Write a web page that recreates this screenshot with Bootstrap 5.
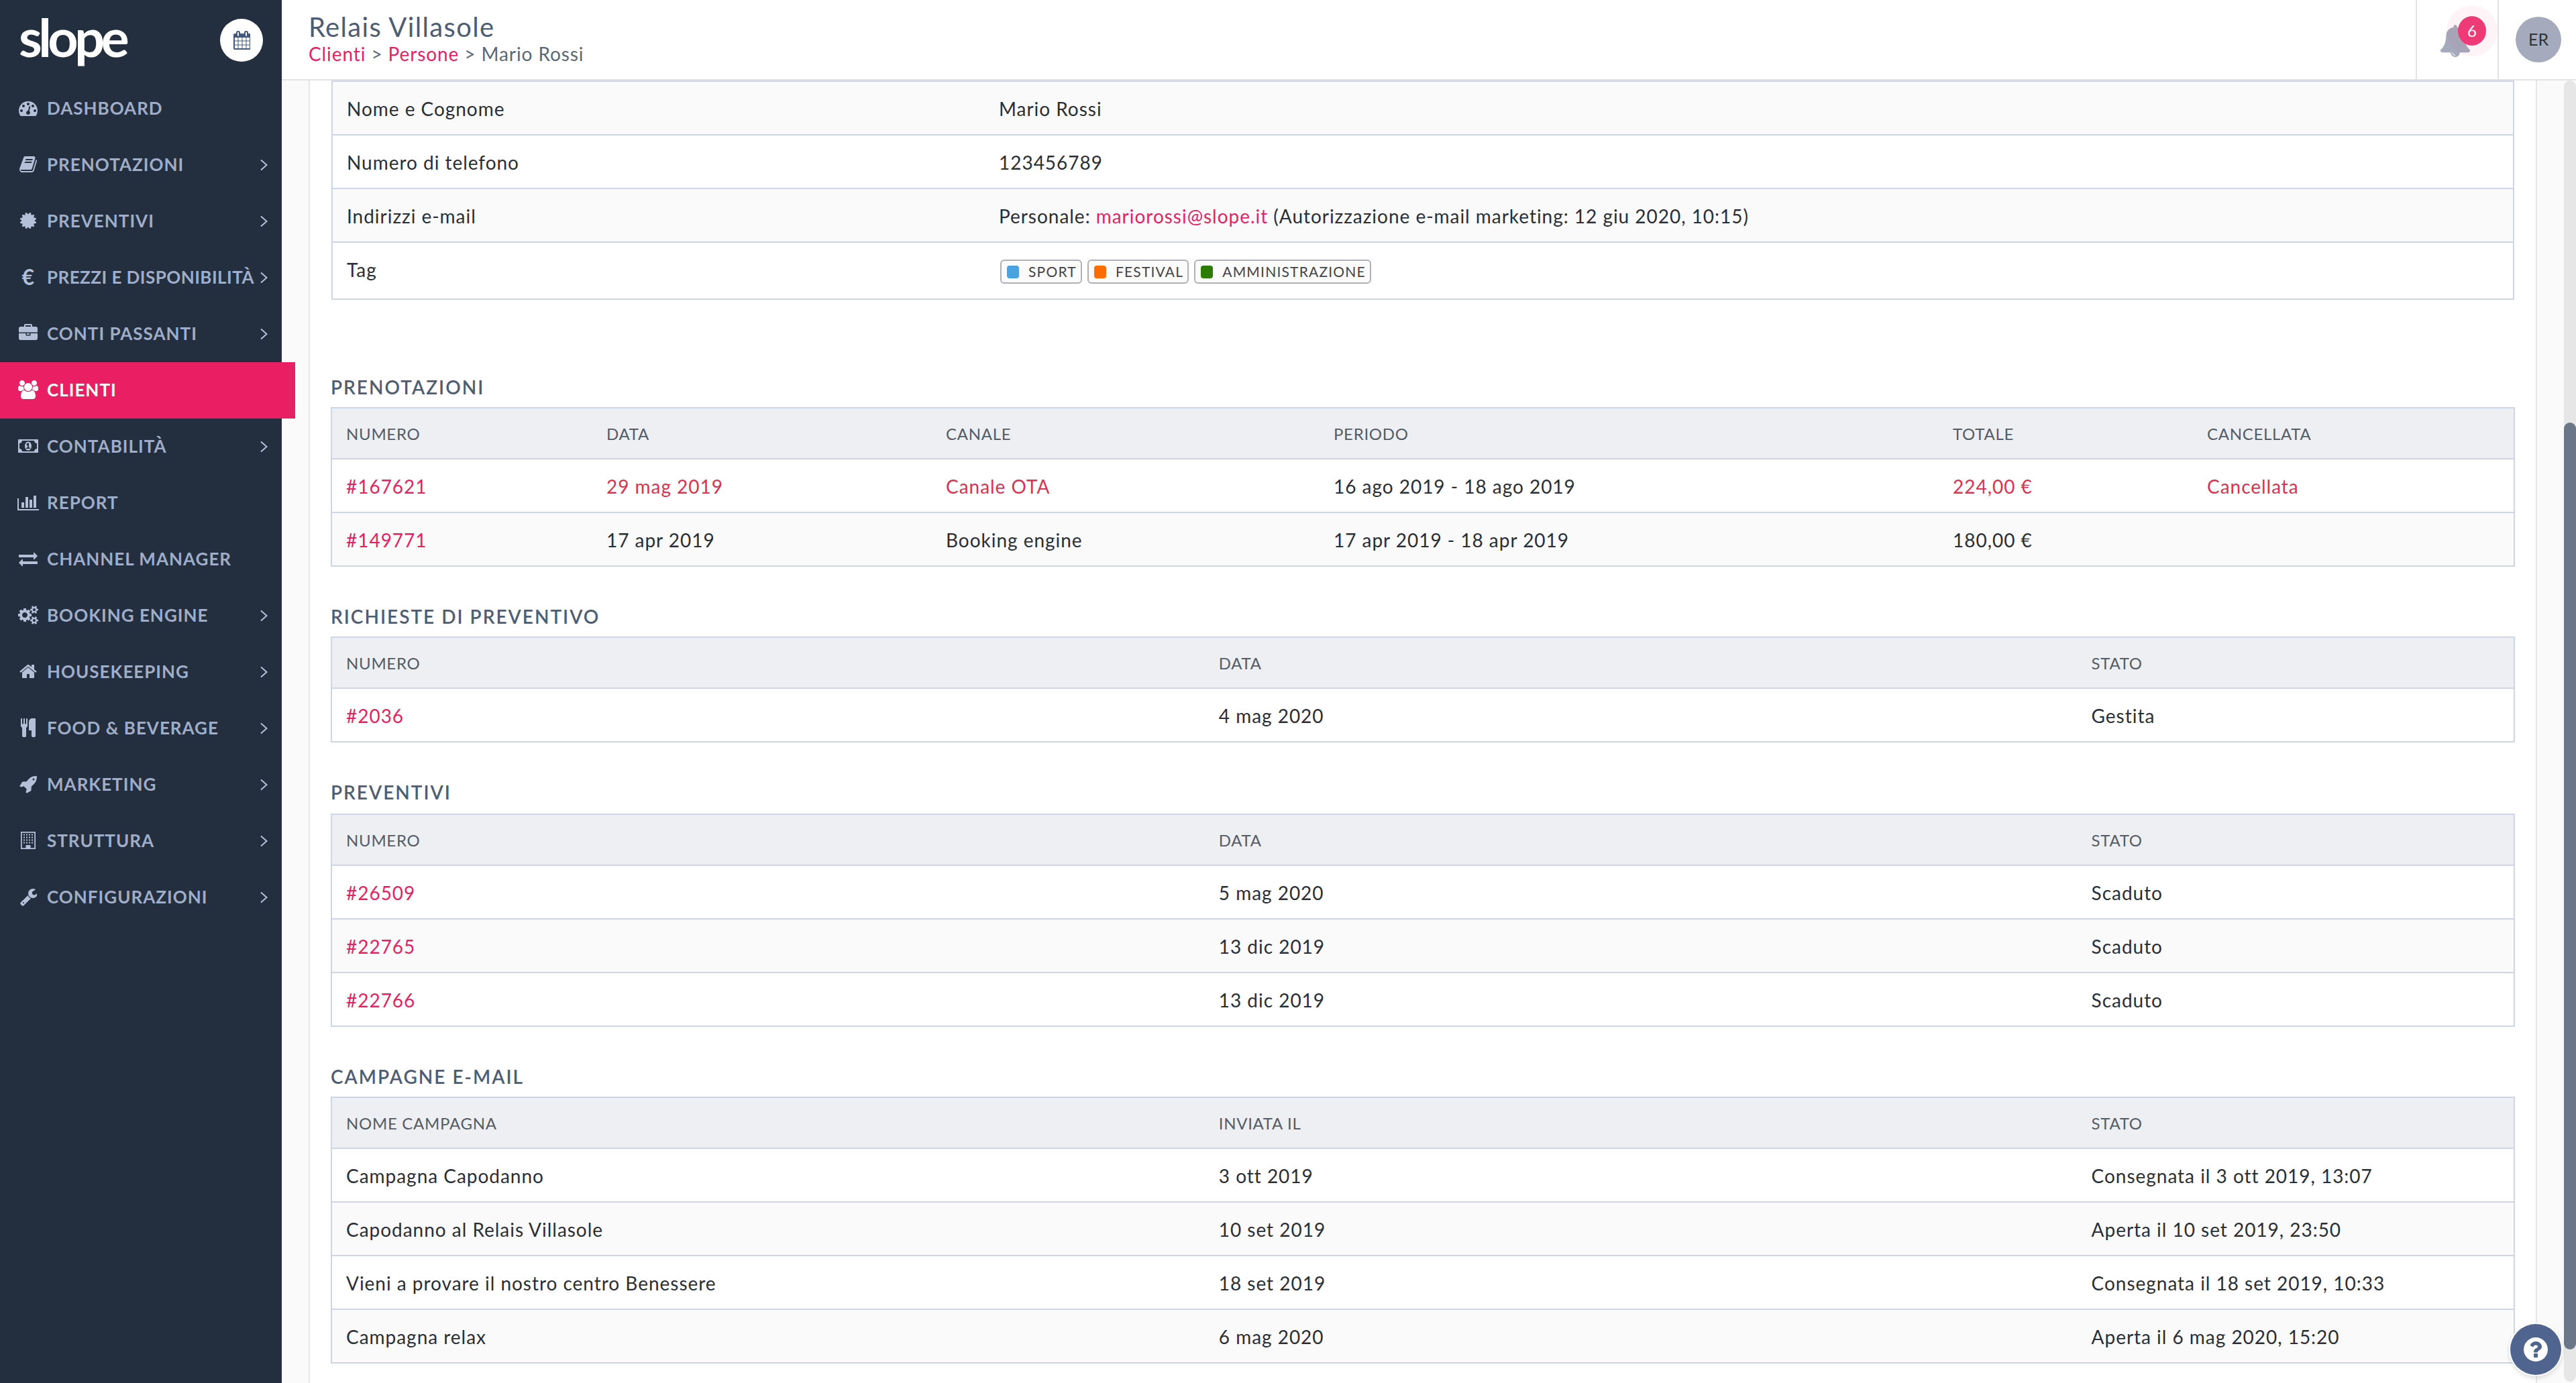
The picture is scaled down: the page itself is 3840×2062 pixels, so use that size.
<!DOCTYPE html>
<html lang="it">
<head>
  <meta charset="UTF-8" />
  <meta name="viewport" content="width=device-width, initial-scale=1.0" />
  <title>Slope - Mario Rossi</title>
  <link href="https://cdn.jsdelivr.net/npm/bootstrap@5.3.0/dist/css/bootstrap.min.css" rel="stylesheet" />
  <style>
    html, body {
      height: 100%;
      margin: 0;
      overflow: hidden;
    }
    body {
      font-family: "Lato", "Liberation Sans", sans-serif;
      font-size: 28px;
      color: #2a2e35;
      background: #fafafa;
    }
    a { color: #e91e63; text-decoration: none; }

    /* sidebar */
    .side-bar {
      width: 420px;
      flex: 0 0 420px;
      height: 100%;
      background: #232f3f;
      position: relative;
      z-index: 3;
    }
    .side-top {
      height: 120px;
      padding: 0 28px;
    }
    .logo-word {
      color: #fff;
      font-size: 79px;
      font-weight: 700;
      line-height: 1;
      letter-spacing: -5.5px;
      margin-top: -12px;
    }
    .cal-btn {
      width: 64px;
      height: 64px;
      background: #fff;
      color: #44587c;
    }
    .cal-btn svg { height: 28px; width: auto; }
    .side-link {
      height: 84px;
      padding: 0 24px 2px;
      color: #9fadc8;
      font-size: 26px;
      font-weight: 700;
      letter-spacing: 1px;
      text-transform: uppercase;
      white-space: nowrap;
    }
    .side-link.tight { letter-spacing: .45px; }
    .side-link.on {
      width: 440px;
      background: #e91e63;
      color: #fff;
    }
    .ico-box {
      width: 36px;
      flex: 0 0 36px;
      margin-right: 10px;
      color: #b4c0d8;
      font-size: 32px;
      line-height: 1;
    }
    .on .ico-box { color: #fff; }
    .ico-box svg { height: 28px; width: auto; fill: currentColor; }
    .chev {
      width: 11px;
      height: 18px;
      margin-left: auto;
      margin-right: -3px;
      margin-top: 2px;
      flex: 0 0 11px;
      fill: none;
      stroke: #b4c0d8;
      stroke-width: 2;
    }

    /* header */
    .main-col { min-width: 0; }
    .top-bar {
      height: 120px;
      flex: 0 0 120px;
      background: #fff;
      border-bottom: 2px solid #e2e2e2;
      padding-left: 40px;
    }
    .hotel-name {
      color: #4e5d72;
      font-size: 40px;
      line-height: 46px;
      margin-top: 17px;
      letter-spacing: 1.35px;
    }
    .crumbs {
      color: #5a6778;
      font-size: 28px;
      line-height: 34px;
      letter-spacing: .9px;
    }
    .bell-cell {
      width: 124px;
      height: 118px;
      border-left: 2px solid #e2e2e2;
      border-right: 2px solid #e2e2e2;
    }
    .bell-ico {
      position: absolute;
      left: 33px;
      top: 37px;
      width: 48px;
      height: 48px;
      fill: #a5abbd;
    }
    .bell-halo {
      position: absolute;
      left: 44px;
      top: 8px;
      width: 76px;
      height: 76px;
      background: rgba(233, 30, 99, .05);
    }
    .bell-count {
      position: absolute;
      left: 61px;
      top: 24px;
      width: 42px;
      height: 44px;
      background: #ee3b77;
      color: #fff;
      font-size: 24px;
    }
    .user-cell { width: 115px; }
    .user-pic {
      width: 68px;
      height: 68px;
      margin-left: 25px;
      background: #a5abbd;
      color: #333;
      font-size: 25px;
    }

    /* content */
    .page-wrap { flex: 1 1 0; min-height: 0; }
    .gutter-l { width: 40px; flex: 0 0 40px; }
    .sheet {
      flex: 1 1 0;
      min-width: 0;
      background: #fff;
      border-left: 2px solid #e6e6e6;
      border-right: 2px solid #e6e6e6;
      padding: 0 31px;
      overflow: hidden;
    }
    .gutter-r { width: 40px; flex: 0 0 40px; }
    .fake-scroll {
      width: 18px;
      flex: 0 0 18px;
      background: #e6e6e6;
      border-radius: 9px;
      margin-bottom: 2px;
    }
    .fake-thumb {
      height: 1382px;
      margin-top: 510px;
      background: #6b7788;
      border-radius: 9px;
    }

    .sec-title {
      color: #4e5d72;
      font-size: 28px;
      font-weight: 600;
      line-height: 34px;
      letter-spacing: 2px;
      text-transform: uppercase;
      margin: 57px 0 13px;
    }
    .sec-title.first { margin-top: 113px; }
    .sec-title.wide-gap { margin-bottom: 15px; }

    .info-tbl, .data-tbl {
      table-layout: fixed;
      border-collapse: separate;
      border-spacing: 0;
      margin: 0;
      font-size: 28px;
      letter-spacing: .97px;
      --bs-table-color: #2a2e35;
      --bs-table-bg: transparent;
    }
    .info-tbl {
      width: calc(100% - 2px);
      margin: 0 1px;
      border: 2px solid #cdd6e6;
      border-bottom: 0;
    }
    .data-tbl {
      border: 2px solid #cdd6e6;
      border-bottom: 0;
    }
    .info-tbl.table > tbody > tr > td,
    .data-tbl.table > tbody > tr > td,
    .data-tbl.table > thead > tr > th {
      border-bottom: 2px solid #cdd6e6;
      padding: 22px 21px 20px;
      line-height: 36px;
      vertical-align: top;
      box-shadow: none;
    }
    .info-tbl.table > tbody > tr > td + td { padding-left: 22px; }
    .data-tbl.table > thead > tr > th {
      background: #edeff3;
      color: #555c66;
      font-size: 24px;
      font-weight: 400;
      line-height: 30px;
      padding: 23px 21px 21px;
      letter-spacing: .7px;
      text-transform: uppercase;
    }
    .info-tbl > tbody > tr:nth-child(odd) > td,
    .data-tbl > tbody > tr:nth-child(even) > td { background: #fafafb; }
    .info-tbl.table > tbody > tr > td.tag-cell { padding-top: 25px; padding-bottom: 22px; }
    .gone { color: #e0304f !important; }

    .w-info { width: 971px; }
    .w-c1 { width: 388px; }
    .w-c2 { width: 506px; }
    .w-c3 { width: 578px; }
    .w-c4 { width: 923px; }
    .w-c5 { width: 379px; }
    .w-40 { width: 40%; }
    .w-20 { width: 20%; }

    .tag-row { padding-left: 2px; }
    .tag-pill {
      height: 36px;
      padding: 0 6px 0 8px;
      margin-right: 8px;
      border: 2px solid #b0b1b6;
      border-radius: 6px;
      background: #fbfbfc;
      color: #444;
      font-size: 21px;
      letter-spacing: 1.2px;
      text-transform: uppercase;
    }
    .tag-dot {
      width: 18px;
      height: 19px;
      border-radius: 4px;
      margin-right: 14px;
    }
    .dot-blue { background: #4aa3e0; }
    .dot-orange { background: #ff6d00; }
    .dot-green { background: #2a7d00; }

    .help-btn {
      position: absolute;
      right: 22px;
      bottom: 12px;
      width: 76px;
      height: 76px;
      background: #4f658f;
      box-shadow: 0 0 0 2px #fff, 0 3px 8px rgba(0, 0, 0, .2);
      z-index: 5;
    }
    .help-btn svg { width: 36px; height: 36px; fill: #fff; }
  </style>
</head>
<body class="d-flex">

  <svg width="0" height="0" class="position-absolute">
    <symbol id="i-dash" viewBox="0 0 1792 1792"><path d="M384 1152q0-53-37.500-90.500t-90.500-37.500-90.500 37.500-37.500 90.500 37.500 90.500 90.500 37.500 90.500-37.500 37.500-90.500zm192-448q0-53-37.500-90.500t-90.500-37.500-90.500 37.500-37.500 90.500 37.500 90.500 90.500 37.500 90.500-37.500 37.500-90.500zm428 481l101-382q6-26-7.500-48.500t-38.500-29.500-48 7-30 39l-101 382q-60 5-107 43.500t-63 98.500q-20 77 20 146t117 89 146-20 89-117q16-60-6-117t-72-91zm660-33q0-53-37.500-90.500t-90.500-37.500-90.500 37.500-37.500 90.500 37.500 90.500 90.500 37.500 90.500-37.500 37.500-90.500zm-640-640q0-53-37.500-90.500t-90.500-37.500-90.500 37.500-37.500 90.500 37.500 90.500 90.500 37.500 90.500-37.500 37.500-90.500zm448 192q0-53-37.500-90.500t-90.500-37.500-90.500 37.500-37.500 90.500 37.500 90.500 90.500 37.500 90.500-37.500 37.500-90.500zm320 448q0 261-141 483-19 29-54 29h-1402q-35 0-54-29-141-221-141-483 0-182 71-348t191-286 286-191 348-71 348 71 286 191 191 286 71 348z"/></symbol>
    <symbol id="i-book" viewBox="0 0 1792 1792"><path d="M1703 478q40 57 18 129l-275 906q-19 64-76.500 107.500t-122.500 43.500h-923q-77 0-148.500-53.500t-99.500-131.500q-24-67-2-127 0-4 3-27t4-37q1-8-3-21.500t-3-19.500q2-11 8-21t16.500-23.500 16.500-23.500q23-38 45-91.500t30-91.500q3-10 .5-30t-.5-28q3-11 17-28t17-23q21-36 42-92t25-90q1-9-2.500-32t.5-28q4-13 22-30.500t22-22.500q19-26 42.500-84.500t27.500-96.500q1-8-3-25.500t-2-26.500q2-8 9-18t18-23 17-21q8-12 16.500-30.500t15-35 16-36 19.500-32 26.500-23.500 36-11.500 47.500 5.500l-1 3q38-9 51-9h761q74 0 114 56t18 130l-274 906q-36 119-71.500 153.500t-128.500 34.500h-869q-27 0-38 15-11 16-1 43 24 70 144 70h923q29 0 56-15.500t35-41.500l300-987q7-22 5-57 38 15 59 43zm-1064 2q-4 13 2 22.500t20 9.500h608q13 0 25.500-9.500t16.500-22.500l21-64q4-13-2-22.500t-20-9.500h-608q-13 0-25.500 9.500t-16.500 22.500zm-83 256q-4 13 2 22.500t20 9.500h608q13 0 25.500-9.500t16.500-22.500l21-64q4-13-2-22.500t-20-9.500h-608q-13 0-25.500 9.500t-16.500 22.500z"/></symbol>
    <symbol id="i-cert" viewBox="0 0 1536 1792"><path transform="translate(-128)" d="M1504 896l138 135q30 28 20 70-12 41-52 51l-188 48 53 186q12 41-19 70-29 31-70 19l-186-53-48 188q-10 40-51 52-12 2-19 2-31 0-51-22l-135-138-135 138q-28 30-70 20-41-11-51-52l-48-188-186 53q-41 12-70-19-31-29-19-70l53-186-188-48q-40-10-52-51-10-42 20-70l138-135-138-135q-30-28-20-70 12-41 52-51l188-48-53-186q-12-41 19-70 29-31 70-19l186 53 48-188q10-41 51-51 41-12 70 19l135 139 135-139q29-30 70-19 41 10 51 51l48 188 186-53q41-12 70 19 31 29 19 70l-53 186 188 48q40 10 52 51 10 42-20 70z"/></symbol>
    <symbol id="i-case" viewBox="0 0 1792 1792"><path d="M640 256h512v-128h-512v128zm1152 640v480q0 66-47 113t-113 47h-1472q-66 0-113-47t-47-113v-480h672v160q0 26 19 45t45 19h320q26 0 45-19t19-45v-160h672zm-768 0v128h-256v-128h256zm768-480v384h-1792v-384q0-66 47-113t113-47h352v-160q0-40 28-68t68-28h576q40 0 68 28t28 68v160h352q66 0 113 47t47 113z"/></symbol>
    <symbol id="i-users" viewBox="0 0 1920 1792"><path d="M593 896q-162 5-265 128h-134q-82 0-138-40.500t-56-118.500q0-353 124-353 6 0 43.500 21t97.500 42.500 119 21.500q67 0 133-23-5 37-5 66 0 139 81 256zm1071 637q0 120-73 189.500t-194 69.500h-874q-121 0-194-69.500t-73-189.500q0-53 3.500-103.500t14-109 26.500-108.500 43-97.500 62-81 85.500-53.500 111.500-20q10 0 43 21.500t73 48 107 48 135 21.500 135-21.500 107-48 73-48 43-21.500q61 0 111.500 20t85.500 53.500 62 81 43 97.500 26.500 108.500 14 109 3.500 103.500zm-1024-1277q0 106-75 181t-181 75-181-75-75-181 75-181 181-75 181 75 75 181zm704 384q0 159-112.500 271.500t-271.500 112.500-271.500-112.500-112.500-271.500 112.500-271.500 271.500-112.500 271.500 112.500 112.500 271.500zm576 225q0 78-56 118.500t-138 40.500h-134q-103-123-265-128 81-117 81-256 0-29-5-66 66 23 133 23 59 0 119-21.500t97.500-42.500 43.500-21q124 0 124 353zm-128-609q0 106-75 181t-181 75-181-75-75-181 75-181 181-75 181 75 75 181z"/></symbol>
    <symbol id="i-money" viewBox="0 0 1920 1792"><path d="M768 1152h384v-96h-128v-448h-114l-148 137 77 80q42-37 55-57h2v288h-128v96zm512-256q0 70-21 142t-59.500 134-101.500 101-138 39-138-39-101.500-101-59.500-134-21-142 21-142 59.500-134 101.500-101 138-39 138 39 101.500 101 59.500 134 21 142zm512 256v-512q-106 0-181-75t-75-181h-1152q0 106-75 181t-181 75v512q106 0 181 75t75 181h1152q0-106 75-181t181-75zm128-832v1152q0 26-19 45t-45 19h-1792q-26 0-45-19t-19-45v-1152q0-26 19-45t45-19h1792q26 0 45 19t19 45z"/></symbol>
    <symbol id="i-chart" viewBox="0 0 2048 1792"><path d="M640 896v512h-256v-512h256zm384-512v1024h-256v-1024h256zm1024 1152v128h-2048v-1152h128v1024h1920zm-640-896v768h-256v-768h256zm384-384v1152h-256v-1152h256z"/></symbol>
    <symbol id="i-swap" viewBox="0 0 1792 1792"><path d="M1792 1184v192q0 13-9.500 22.500t-22.500 9.500h-1376v192q0 13-9.500 22.500t-22.500 9.500q-12 0-24-10l-319-320q-9-9-9-22 0-14 9-23l320-320q9-9 23-9 13 0 22.500 9.500t9.500 22.500v192h1376q13 0 22.500 9.500t9.500 22.500zm0-544q0 14-9 23l-320 320q-9 9-23 9-13 0-22.500-9.500t-9.500-22.500v-192h-1376q-13 0-22.500-9.500t-9.500-22.500v-192q0-13 9.500-22.500t22.500-9.500h1376v-192q0-14 9-23t23-9q12 0 24 10l319 319q9 9 9 23z"/></symbol>
    <symbol id="i-cogs" viewBox="0 0 1920 1792"><path d="M896 896q0-106-75-181t-181-75-181 75-75 181 75 181 181 75 181-75 75-181zm768 512q0-52-38-90t-90-38-90 38-38 90q0 53 37.500 90.500t90.500 37.500 90.500-37.500 37.500-90.500zm0-1024q0-52-38-90t-90-38-90 38-38 90q0 53 37.500 90.500t90.500 37.500 90.500-37.500 37.500-90.500zm-384 421v185q0 10-7 19.500t-16 10.500l-155 24q-11 35-32 76 34 48 90 115 7 11 7 20 0 12-7 19-23 30-82.500 89.500t-78.500 59.500q-11 0-21-7l-115-90q-37 19-77 31-11 108-23 155-7 24-30 24h-186q-11 0-20-7.500t-10-17.500l-23-153q-34-10-75-31l-118 89q-7 7-20 7-11 0-21-8-144-133-144-160 0-9 7-19 10-14 41-53t47-61q-23-44-35-82l-152-24q-10-1-17-9.500t-7-19.500v-185q0-10 7-19.500t16-10.500l155-24q11-35 32-76-34-48-90-115-7-11-7-20 0-12 7-20 22-30 82-89t79-59q11 0 21 7l115 90q34-18 77-32 11-108 23-154 7-24 30-24h186q11 0 20 7.500t10 17.500l23 153q34 10 75 31l118-89q8-7 20-7 11 0 21 8 144 133 144 160 0 8-7 19-12 16-42 54t-45 60q23 48 34 82l152 23q10 2 17 10.500t7 19.500zm640 533v140q0 16-149 31-12 27-30 52 51 113 51 138 0 4-4 7-122 71-124 71-8 0-46-47t-52-68q-20 2-30 2t-30-2q-14 21-52 68t-46 47q-2 0-124-71-4-3-4-7 0-25 51-138-18-25-30-52-149-15-149-31v-140q0-16 149-31 13-29 30-52-51-113-51-138 0-4 4-7 4-2 35-20t59-34 30-16q8 0 46 46.500t52 67.500q20-2 30-2t30 2q51-71 92-112l6-2q4 0 124 70 4 3 4 7 0 25-51 138 17 23 30 52 149 15 149 31zm0-1024v140q0 16-149 31-12 27-30 52 51 113 51 138 0 4-4 7-122 71-124 71-8 0-46-47t-52-68q-20 2-30 2t-30-2q-14 21-52 68t-46 47q-2 0-124-71-4-3-4-7 0-25 51-138-18-25-30-52-149-15-149-31v-140q0-16 149-31 13-29 30-52-51-113-51-138 0-4 4-7 4-2 35-20t59-34 30-16q8 0 46 46.500t52 67.500q20-2 30-2t30 2q51-71 92-112l6-2q4 0 124 70 4 3 4 7 0 25-51 138 17 23 30 52 149 15 149 31z"/></symbol>
    <symbol id="i-home" viewBox="0 0 1664 1792"><path transform="translate(-64)" d="M1472 992v480q0 26-19 45t-45 19h-384v-384h-256v384h-384q-26 0-45-19t-19-45v-480q0-1 .5-3t.5-3l575-474 575 474q1 2 1 6zm223-69l-62 74q-8 9-21 11h-3q-13 0-21-7l-692-577-692 577q-12 8-24 7-13-2-21-11l-62-74q-8-10-7-23.500t11-21.500l719-599q32-26 76-26t76 26l244 204v-195q0-14 9-23t23-9h192q14 0 23 9t9 23v408l219 182q10 8 11 21.500t-7 23.500z"/></symbol>
    <symbol id="i-food" viewBox="0 0 1408 1792"><path d="M640 64v640q0 61-35.500 111t-92.500 70v779q0 52-38 90t-90 38h-128q-52 0-90-38t-38-90v-779q-57-20-92.500-70t-35.500-111v-640q0-26 19-45t45-19 45 19 19 45v416q0 26 19 45t45 19 45-19 19-45v-416q0-26 19-45t45-19 45 19 19 45v416q0 26 19 45t45 19 45-19 19-45v-416q0-26 19-45t45-19 45 19 19 45zm768 0v1600q0 52-38 90t-90 38h-128q-52 0-90-38t-38-90v-512h-224q-13 0-22.500-9.500t-9.500-22.500v-800q0-132 94-226t226-94h256q26 0 45 19t19 45z"/></symbol>
    <symbol id="i-rocket" viewBox="0 0 1664 1792"><path transform="translate(-64)" d="M1504 448q0-40-28-68t-68-28-68 28-28 68 28 68 68 28 68-28 28-68zm224-288q0 249-75.500 430.500t-253.500 360.500q-81 80-195 176l-20 379q-2 16-16 26l-384 224q-7 4-16 4-12 0-23-9l-64-64q-13-14-8-32l85-276-281-281-276 85q-3 1-9 1-14 0-23-9l-64-64q-17-19-5-39l224-384q10-14 26-16l379-20q96-114 176-195 188-187 358-258t431-71q14 0 24 9.500t10 22.500z"/></symbol>
    <symbol id="i-wrench" viewBox="0 0 1664 1792"><path d="M448 1472q0-26-19-45t-45-19-45 19-19 45 19 45 45 19 45-19 19-45zm644-420l-682 682q-37 37-90 37-52 0-91-37l-106-108q-38-36-38-90 0-53 38-91l681-681q39 98 114.500 173.500t173.500 114.500zm634-435q0 39-23 106-47 134-164.500 217.500t-258.500 83.500q-185 0-316.500-131.500t-131.500-316.500 131.500-316.500 316.500-131.500q58 0 121.500 16.500t107.500 46.500q16 11 16 28t-16 28l-293 169v224l193 107q5-3 79-48.500t135.500-81 70.500-35.500q15 0 23.500 10t8.500 25z"/></symbol>
    <symbol id="i-build" viewBox="0 0 1408 1792"><path fill-rule="evenodd" d="M0 64h1408v1664H0zM112 176v1440h368v-272h448v272h368V176zM256 288h128v128H256zm256 0h128v128H512zm256 0h128v128H768zm256 0h128v128h-128zM256 544h128v128H256zm256 0h128v128H512zm256 0h128v128H768zm256 0h128v128h-128zM256 800h128v128H256zm256 0h128v128H512zm256 0h128v128H768zm256 0h128v128h-128zM256 1056h128v128H256zm256 0h128v128H512zm256 0h128v128H768zm256 0h128v128h-128z"/></symbol>
    <symbol id="i-cal" viewBox="0 0 1664 1792"><path d="M192 1664h288v-288h-288v288zm352 0h320v-288h-320v288zm-352-352h288v-320h-288v320zm352 0h320v-320h-320v320zm-352-384h288v-288h-288v288zm736 736h320v-288h-320v288zm-384-736h320v-288h-320v288zm768 736h288v-288h-288v288zm-384-352h320v-320h-320v320zm-352-864v-288q0-13-9.500-22.500t-22.500-9.500h-64q-13 0-22.500 9.500t-9.500 22.500v288q0 13 9.500 22.500t22.500 9.500h64q13 0 22.500-9.500t9.500-22.500zm736 864h288v-320h-288v320zm-384-384h320v-288h-320v288zm384 0h288v-288h-288v288zm32-480v-288q0-13-9.500-22.500t-22.500-9.500h-64q-13 0-22.500 9.500t-9.500 22.500v288q0 13 9.500 22.500t22.500 9.500h64q13 0 22.500-9.500t9.500-22.500zm384-64v1280q0 52-38 90t-90 38h-1408q-52 0-90-38t-38-90v-1280q0-52 38-90t90-38h128v-96q0-66 47-113t113-47h64q66 0 113 47t47 113v96h384v-96q0-66 47-113t113-47h64q66 0 113 47t47 113v96h128q52 0 90 38t38 90z"/></symbol>
    <symbol id="i-chev" viewBox="0 0 11 18"><path d="M1 1.500 9.500 9 1 16.500"/></symbol>
  </svg>

  <aside class="side-bar">
    <div class="side-top d-flex align-items-center justify-content-between">
      <span class="logo-word">slope</span>
      <span class="cal-btn rounded-circle d-flex align-items-center justify-content-center"><svg viewBox="0 0 1664 1792" fill="currentColor"><use href="#i-cal"/></svg></span>
    </div>
    <nav>
      <a class="side-link d-flex align-items-center" href="#"><span class="ico-box d-flex justify-content-center"><svg viewBox="0 0 1792 1792"><use href="#i-dash"/></svg></span>Dashboard</a>
      <a class="side-link d-flex align-items-center" href="#"><span class="ico-box d-flex justify-content-center"><svg viewBox="0 0 1792 1792"><use href="#i-book"/></svg></span>Prenotazioni<svg class="chev"><use href="#i-chev"/></svg></a>
      <a class="side-link d-flex align-items-center" href="#"><span class="ico-box d-flex justify-content-center"><svg viewBox="0 0 1536 1792"><use href="#i-cert"/></svg></span>Preventivi<svg class="chev"><use href="#i-chev"/></svg></a>
      <a class="side-link tight d-flex align-items-center" href="#"><span class="ico-box d-flex justify-content-center">€</span>Prezzi e disponibilità<svg class="chev"><use href="#i-chev"/></svg></a>
      <a class="side-link d-flex align-items-center" href="#"><span class="ico-box d-flex justify-content-center"><svg viewBox="0 0 1792 1792"><use href="#i-case"/></svg></span>Conti passanti<svg class="chev"><use href="#i-chev"/></svg></a>
      <a class="side-link on d-flex align-items-center" href="#"><span class="ico-box d-flex justify-content-center"><svg viewBox="0 0 1920 1792"><use href="#i-users"/></svg></span>Clienti</a>
      <a class="side-link d-flex align-items-center" href="#"><span class="ico-box d-flex justify-content-center"><svg viewBox="0 0 1920 1792"><use href="#i-money"/></svg></span>Contabilità<svg class="chev"><use href="#i-chev"/></svg></a>
      <a class="side-link d-flex align-items-center" href="#"><span class="ico-box d-flex justify-content-center"><svg viewBox="0 0 2048 1792"><use href="#i-chart"/></svg></span>Report</a>
      <a class="side-link d-flex align-items-center" href="#"><span class="ico-box d-flex justify-content-center"><svg viewBox="0 0 1792 1792"><use href="#i-swap"/></svg></span>Channel manager</a>
      <a class="side-link d-flex align-items-center" href="#"><span class="ico-box d-flex justify-content-center"><svg viewBox="0 0 1920 1792"><use href="#i-cogs"/></svg></span>Booking engine<svg class="chev"><use href="#i-chev"/></svg></a>
      <a class="side-link d-flex align-items-center" href="#"><span class="ico-box d-flex justify-content-center"><svg viewBox="0 0 1664 1792"><use href="#i-home"/></svg></span>Housekeeping<svg class="chev"><use href="#i-chev"/></svg></a>
      <a class="side-link d-flex align-items-center" href="#"><span class="ico-box d-flex justify-content-center"><svg viewBox="0 0 1408 1792"><use href="#i-food"/></svg></span>Food &amp; beverage<svg class="chev"><use href="#i-chev"/></svg></a>
      <a class="side-link d-flex align-items-center" href="#"><span class="ico-box d-flex justify-content-center"><svg viewBox="0 0 1664 1792"><use href="#i-rocket"/></svg></span>Marketing<svg class="chev"><use href="#i-chev"/></svg></a>
      <a class="side-link d-flex align-items-center" href="#"><span class="ico-box d-flex justify-content-center"><svg viewBox="0 0 1408 1792"><use href="#i-build"/></svg></span>Struttura<svg class="chev"><use href="#i-chev"/></svg></a>
      <a class="side-link d-flex align-items-center" href="#"><span class="ico-box d-flex justify-content-center"><svg viewBox="0 0 1664 1792"><use href="#i-wrench"/></svg></span>Configurazioni<svg class="chev"><use href="#i-chev"/></svg></a>
    </nav>
  </aside>

  <div class="main-col d-flex flex-column flex-grow-1 h-100">
    <header class="top-bar d-flex justify-content-between">
      <div>
        <div class="hotel-name">Relais Villasole</div>
        <div class="crumbs"><a href="#">Clienti</a> &gt; <a href="#">Persone</a> &gt; Mario Rossi</div>
      </div>
      <div class="d-flex">
        <div class="bell-cell position-relative">
          <svg class="bell-ico" viewBox="0 0 1792 1792"><path d="M912 1696q0-16-16-16-59 0-101.500-42.500t-42.500-101.500q0-16-16-16t-16 16q0 73 51.500 124.500t124.500 51.500q16 0 16-16zm816-288q0 52-38 90t-90 38h-448q0 106-75 181t-181 75-181-75-75-181h-448q-52 0-90-38t-38-90q50-42 91-88t85-119.500 74.500-158.500 50-206 19.500-260q0-152 117-282.500t307-158.500q-8-19-8-39 0-40 28-68t68-28 68 28 28 68q0 20-8 39 190 28 307 158.500t117 282.500q0 139 19.500 260t50 206 74.500 158.500 85 119.500 91 88z"/></svg>
          <span class="bell-halo rounded-circle"></span>
          <span class="bell-count rounded-circle d-flex align-items-center justify-content-center">6</span>
        </div>
        <div class="user-cell d-flex align-items-center">
          <span class="user-pic rounded-circle d-flex align-items-center justify-content-center">ER</span>
        </div>
      </div>
    </header>

    <div class="page-wrap d-flex">
      <div class="gutter-l"></div>
      <main class="sheet">
        <table class="table info-tbl">
          <colgroup><col class="w-info"><col></colgroup>
          <tbody>
            <tr><td>Nome e Cognome</td><td>Mario Rossi</td></tr>
            <tr><td>Numero di telefono</td><td>123456789</td></tr>
            <tr><td>Indirizzi e-mail</td><td>Personale: <a href="#">mariorossi@slope.it</a> (Autorizzazione e-mail marketing: 12 giu 2020, 10:15)</td></tr>
            <tr>
              <td>Tag</td>
              <td class="tag-cell">
                <div class="tag-row d-flex">
                  <span class="tag-pill d-inline-flex align-items-center"><span class="tag-dot dot-blue"></span>Sport</span>
                  <span class="tag-pill d-inline-flex align-items-center"><span class="tag-dot dot-orange"></span>Festival</span>
                  <span class="tag-pill d-inline-flex align-items-center"><span class="tag-dot dot-green"></span>Amministrazione</span>
                </div>
              </td>
            </tr>
          </tbody>
        </table>

        <h2 class="sec-title first">Prenotazioni</h2>
        <table class="table data-tbl">
          <colgroup><col class="w-c1"><col class="w-c2"><col class="w-c3"><col class="w-c4"><col class="w-c5"><col></colgroup>
          <thead><tr><th>Numero</th><th>Data</th><th>Canale</th><th>Periodo</th><th>Totale</th><th>Cancellata</th></tr></thead>
          <tbody>
            <tr><td><a href="#">#167621</a></td><td class="gone">29 mag 2019</td><td class="gone">Canale OTA</td><td>16 ago 2019 - 18 ago 2019</td><td class="gone">224,00 €</td><td class="gone">Cancellata</td></tr>
            <tr><td><a href="#">#149771</a></td><td>17 apr 2019</td><td>Booking engine</td><td>17 apr 2019 - 18 apr 2019</td><td>180,00 €</td><td></td></tr>
          </tbody>
        </table>

        <h2 class="sec-title">Richieste di preventivo</h2>
        <table class="table data-tbl">
          <colgroup><col class="w-40"><col class="w-40"><col class="w-20"></colgroup>
          <thead><tr><th>Numero</th><th>Data</th><th>Stato</th></tr></thead>
          <tbody>
            <tr><td><a href="#">#2036</a></td><td>4 mag 2020</td><td>Gestita</td></tr>
          </tbody>
        </table>

        <h2 class="sec-title wide-gap">Preventivi</h2>
        <table class="table data-tbl">
          <colgroup><col class="w-40"><col class="w-40"><col class="w-20"></colgroup>
          <thead><tr><th>Numero</th><th>Data</th><th>Stato</th></tr></thead>
          <tbody>
            <tr><td><a href="#">#26509</a></td><td>5 mag 2020</td><td>Scaduto</td></tr>
            <tr><td><a href="#">#22765</a></td><td>13 dic 2019</td><td>Scaduto</td></tr>
            <tr><td><a href="#">#22766</a></td><td>13 dic 2019</td><td>Scaduto</td></tr>
          </tbody>
        </table>

        <h2 class="sec-title">Campagne e-mail</h2>
        <table class="table data-tbl">
          <colgroup><col class="w-40"><col class="w-40"><col class="w-20"></colgroup>
          <thead><tr><th>Nome campagna</th><th>Inviata il</th><th>Stato</th></tr></thead>
          <tbody>
            <tr><td>Campagna Capodanno</td><td>3 ott 2019</td><td>Consegnata il 3 ott 2019, 13:07</td></tr>
            <tr><td>Capodanno al Relais Villasole</td><td>10 set 2019</td><td>Aperta il 10 set 2019, 23:50</td></tr>
            <tr><td>Vieni a provare il nostro centro Benessere</td><td>18 set 2019</td><td>Consegnata il 18 set 2019, 10:33</td></tr>
            <tr><td>Campagna relax</td><td>6 mag 2020</td><td>Aperta il 6 mag 2020, 15:20</td></tr>
          </tbody>
        </table>
      </main>
      <div class="gutter-r"></div>
      <div class="fake-scroll"><div class="fake-thumb"></div></div>
    </div>
  </div>

  <a class="help-btn rounded-circle d-flex align-items-center justify-content-center" href="#">
    <svg viewBox="128 128 1536 1536"><path d="M1024 1376v-192q0-14-9-23t-23-9h-192q-14 0-23 9t-9 23v192q0 14 9 23t23 9h192q14 0 23-9t9-23zm256-672q0-88-55.500-163t-138.500-116-170-41q-243 0-371 213-15 24 8 42l132 100q7 6 19 6 16 0 25-12 53-68 86-92 34-24 86-24 48 0 85.500 26t37.500 59q0 38-20 61t-68 45q-63 28-115.500 86.500t-52.500 125.500v36q0 14 9 23t23 9h192q14 0 23-9t9-23q0-19 21.500-49.500t54.500-49.500q32-18 49-28.500t46-35 44.500-48 28-60.500 12.500-81zm384 192q0 209-103 385.500t-279.500 279.500-385.500 103-385.500-103-279.500-279.500-103-385.500 103-385.500 279.500-279.500 385.500-103 385.500 103 279.500 279.500 103 385.500z"/></svg>
  </a>

  <script src="https://cdn.jsdelivr.net/npm/bootstrap@5.3.0/dist/js/bootstrap.bundle.min.js"></script>
</body>
</html>
